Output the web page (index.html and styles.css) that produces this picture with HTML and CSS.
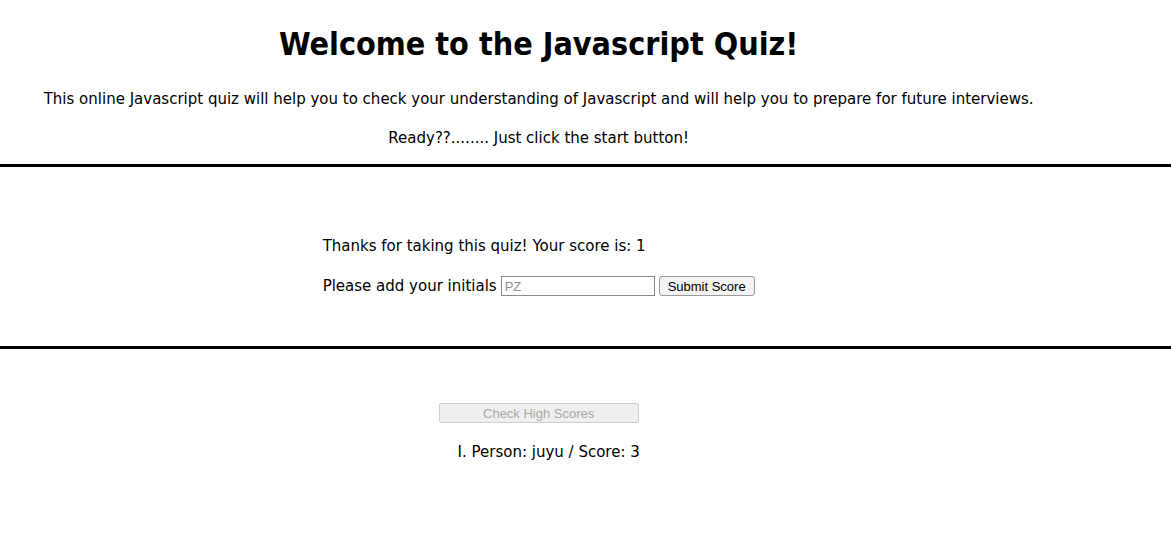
FILE: index.html
```html
<!DOCTYPE html>
<html>
<head>
<meta charset="utf-8">
<link rel="stylesheet" href="styles.css">
<title>Javascript Quiz</title>
</head>
<body>
<header class="intro">
  <div class="wrap">
    <h1 class="title">Welcome to the Javascript Quiz!</h1>
    <p class="lead">This online Javascript quiz will help you to check your understanding of Javascript and will help you to prepare for future interviews.</p>
    <p class="lead">Ready??........ Just click the start button!</p>
  </div>
</header>
<section class="result">
  <div class="wrap">
    <div class="result-box">
      <p class="line">Thanks for taking this quiz! Your score is: 1</p>
      <div class="line form-row">
        <label class="label" for="initials">Please add your initials</label>
        <input class="initials" id="initials" type="text" placeholder="PZ">
        <button class="submit" type="button">Submit Score</button>
      </div>
    </div>
  </div>
</section>
<section class="scores">
  <div class="wrap">
    <button class="check" type="button" disabled>Check High Scores</button>
    <ol class="score-list">
      <li>Person: juyu / Score: 3</li>
    </ol>
  </div>
</section>
</body>
</html>
```
FILE: styles.css
```css
html, body {
  margin: 0;
  padding: 0;
  background: #fff;
}
body {
  font-family: "Comic Sans MS", "DejaVu Sans", sans-serif;
  font-size: 15px;
  color: #000;
}
.wrap {
  width: 92%;
  text-align: center;
}
.intro {
  border-bottom: 3px solid #000;
  padding: 22px 0 0;
}
.title {
  font-family: "Comic Sans MS", "DejaVu Sans Condensed", "DejaVu Sans", sans-serif;
  font-stretch: condensed;
  font-size: 32px;
  line-height: 44px;
  font-weight: bold;
  margin: 0 0 22px;
}
.lead {
  line-height: 22px;
  margin: 17px 0 15px;
}
.result {
  border-bottom: 3px solid #000;
  padding: 68px 0 49px;
}
.result-box {
  display: inline-block;
  text-align: left;
}
.line {
  line-height: 22px;
  margin: 0;
}
.form-row {
  display: flex;
  align-items: center;
  margin-top: 18px;
}
.label {
  margin-right: 4px;
}
.initials {
  width: 154px;
  height: 20px;
  box-sizing: border-box;
  border: 1px solid #8a8a8a;
  padding: 1px 3px;
  font-family: "Liberation Sans", Arial, sans-serif;
  font-size: 13px;
  margin: 0 4px 0 0;
}
.initials::placeholder {
  color: #8e8e8e;
}
.submit {
  height: 20px;
  width: 96px;
  box-sizing: border-box;
  border: 1px solid #9a9a9a;
  border-radius: 3px;
  background: #f3f3f3;
  font-family: "Liberation Sans", Arial, sans-serif;
  font-size: 13px;
  color: #000;
  padding: 0;
}
.scores {
  padding: 54px 0 0;
}
.check {
  width: 200px;
  height: 20px;
  box-sizing: border-box;
  border: 1px solid #cfcfcf;
  border-radius: 2px;
  background: #efefef;
  color: #a8a8a8;
  font-family: "Liberation Sans", Arial, sans-serif;
  font-size: 13px;
  padding: 0;
}
.score-list {
  list-style-type: upper-roman;
  list-style-position: inside;
  padding: 0 0 0 20px;
  margin: 18px 0 0;
  line-height: 22px;
}
```
